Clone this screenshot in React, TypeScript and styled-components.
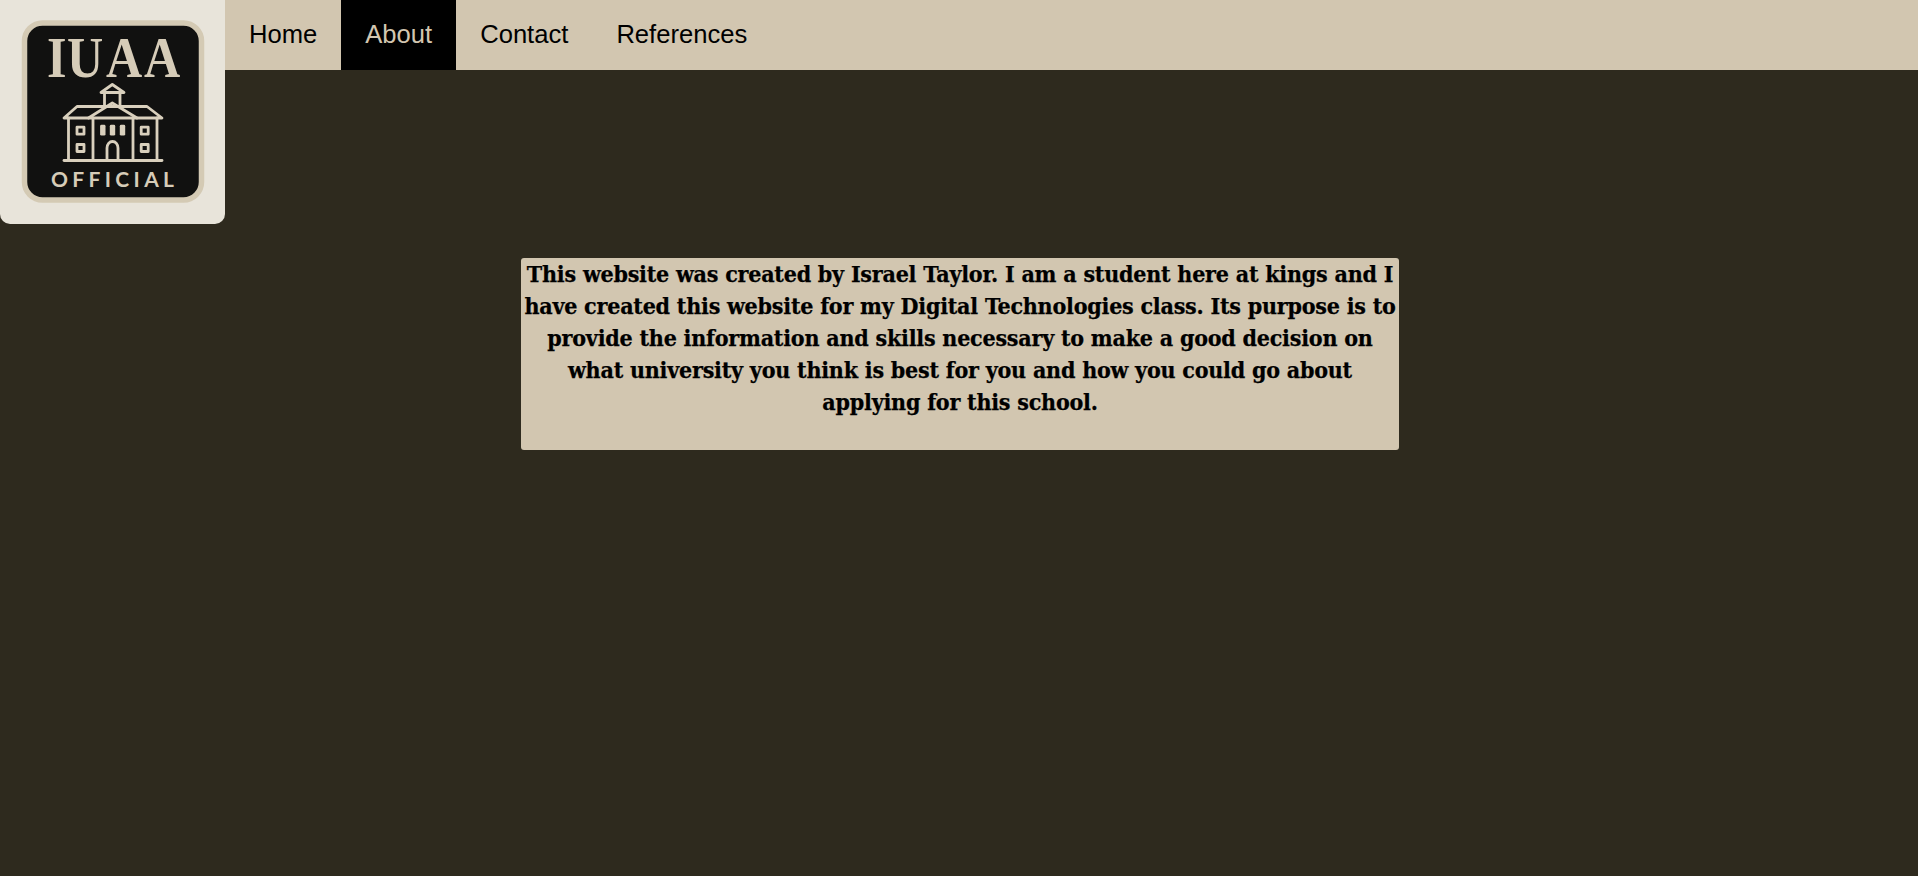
import React from "react";
import styled, { createGlobalStyle } from "styled-components";

const GlobalStyle = createGlobalStyle`
  html, body {
    margin: 0;
    padding: 0;
    background: #2e2a1e;
  }
`;

const Page = styled.div`
  min-height: 876px;
  background: #2e2a1e;
`;

const Header = styled.header`
  display: flex;
  align-items: flex-start;
`;

const LogoBox = styled.div`
  flex: 0 0 225px;
  height: 224px;
  background: #e8e4da;
  border-radius: 0 0 10px 10px;
`;

const NavBar = styled.nav`
  flex: 1;
  display: flex;
  height: 70px;
  background: #d2c6b0;
`;

const NavLink = styled.a<{ $active?: boolean }>`
  padding: 0 24px;
  line-height: 68px;
  font-family: "Liberation Sans", Arial, sans-serif;
  font-size: 25.6px;
  color: ${(p) => (p.$active ? "#d2c6b0" : "#000")};
  background: ${(p) => (p.$active ? "#000" : "transparent")};
`;

const Main = styled.main`
  padding-left: 2px;
`;

const InfoCard = styled.section`
  width: 878px;
  box-sizing: border-box;
  margin: 34px auto 0;
  padding: 0 0 32px;
  background: #d2c6b0;
  border-radius: 3px;
  color: #000;
  text-align: center;
  font-family: "DejaVu Serif Condensed", "DejaVu Serif", serif;
  font-weight: 700;
  font-size: 23px;
  line-height: 32px;
  letter-spacing: -0.22px;
  -webkit-text-stroke: 0.25px #000;
`;

const Logo = () => (
  <svg width="225" height="224" viewBox="0 0 225 224">
    <rect x="24.5" y="23" width="177" height="177" rx="18" fill="#111110" stroke="#d4cab4" strokeWidth="5.5" />
    <text
      transform="scale(0.88 1)"
      x="53.4 76.1 120.5 163.6"
      y="77"
      fontFamily="Liberation Serif, serif"
      fontSize="57"
      fontWeight="700"
      fill="#d6ccb8"
    >
      IUAA
    </text>
    <g fill="none" stroke="#d9d0bd" strokeWidth="2.8" strokeLinejoin="round" strokeLinecap="round">
      <path d="M101 92.5 L112.3 84.5 L124 92.5 Z" />
      <path d="M104.5 92.5 V107 M120 92.5 V107" />
      <path d="M64 118 L77 106.5 H147 L162 118 Z" />
      <path d="M88.5 118 L112.3 103 L137 118" />
      <path d="M68.5 118 V160 M157 118 V160 M93 118 V160 M133 118 V160" />
      <path d="M64 160.5 H162" />
      <rect x="77" y="127.2" width="7" height="7" />
      <rect x="77" y="144.5" width="7" height="7" />
      <rect x="141.2" y="127.2" width="7" height="7" />
      <rect x="141.2" y="144.5" width="7" height="7" />
      <rect x="101.5" y="126.2" width="2.6" height="8" />
      <rect x="111.2" y="126.2" width="2.6" height="8" />
      <rect x="121.2" y="126.2" width="2.6" height="8" />
      <path d="M107 160 V148 a5.5 6.5 0 0 1 11 0 V160" />
    </g>
    <text x="51" y="187" fontFamily="Lato, sans-serif" fontSize="21" fontWeight="700" fill="#d6ccb8" textLength="123">
      OFFICIAL
    </text>
  </svg>
);

const App = () => {
  return (
    <Page>
      <GlobalStyle />
      <Header>
        <LogoBox>
          <Logo />
        </LogoBox>
        <NavBar>
          <NavLink>Home</NavLink>
          <NavLink $active>About</NavLink>
          <NavLink>Contact</NavLink>
          <NavLink>References</NavLink>
        </NavBar>
      </Header>
      <Main>
        <InfoCard>
          This website was created by Israel Taylor. I am a student here at kings and I have created this website
          for my Digital Technologies class. Its purpose is to provide the information and skills necessary to make
          a good decision on what university you think is best for you and how you could go about applying for this
          school.
        </InfoCard>
      </Main>
    </Page>
  );
};

export default App;
